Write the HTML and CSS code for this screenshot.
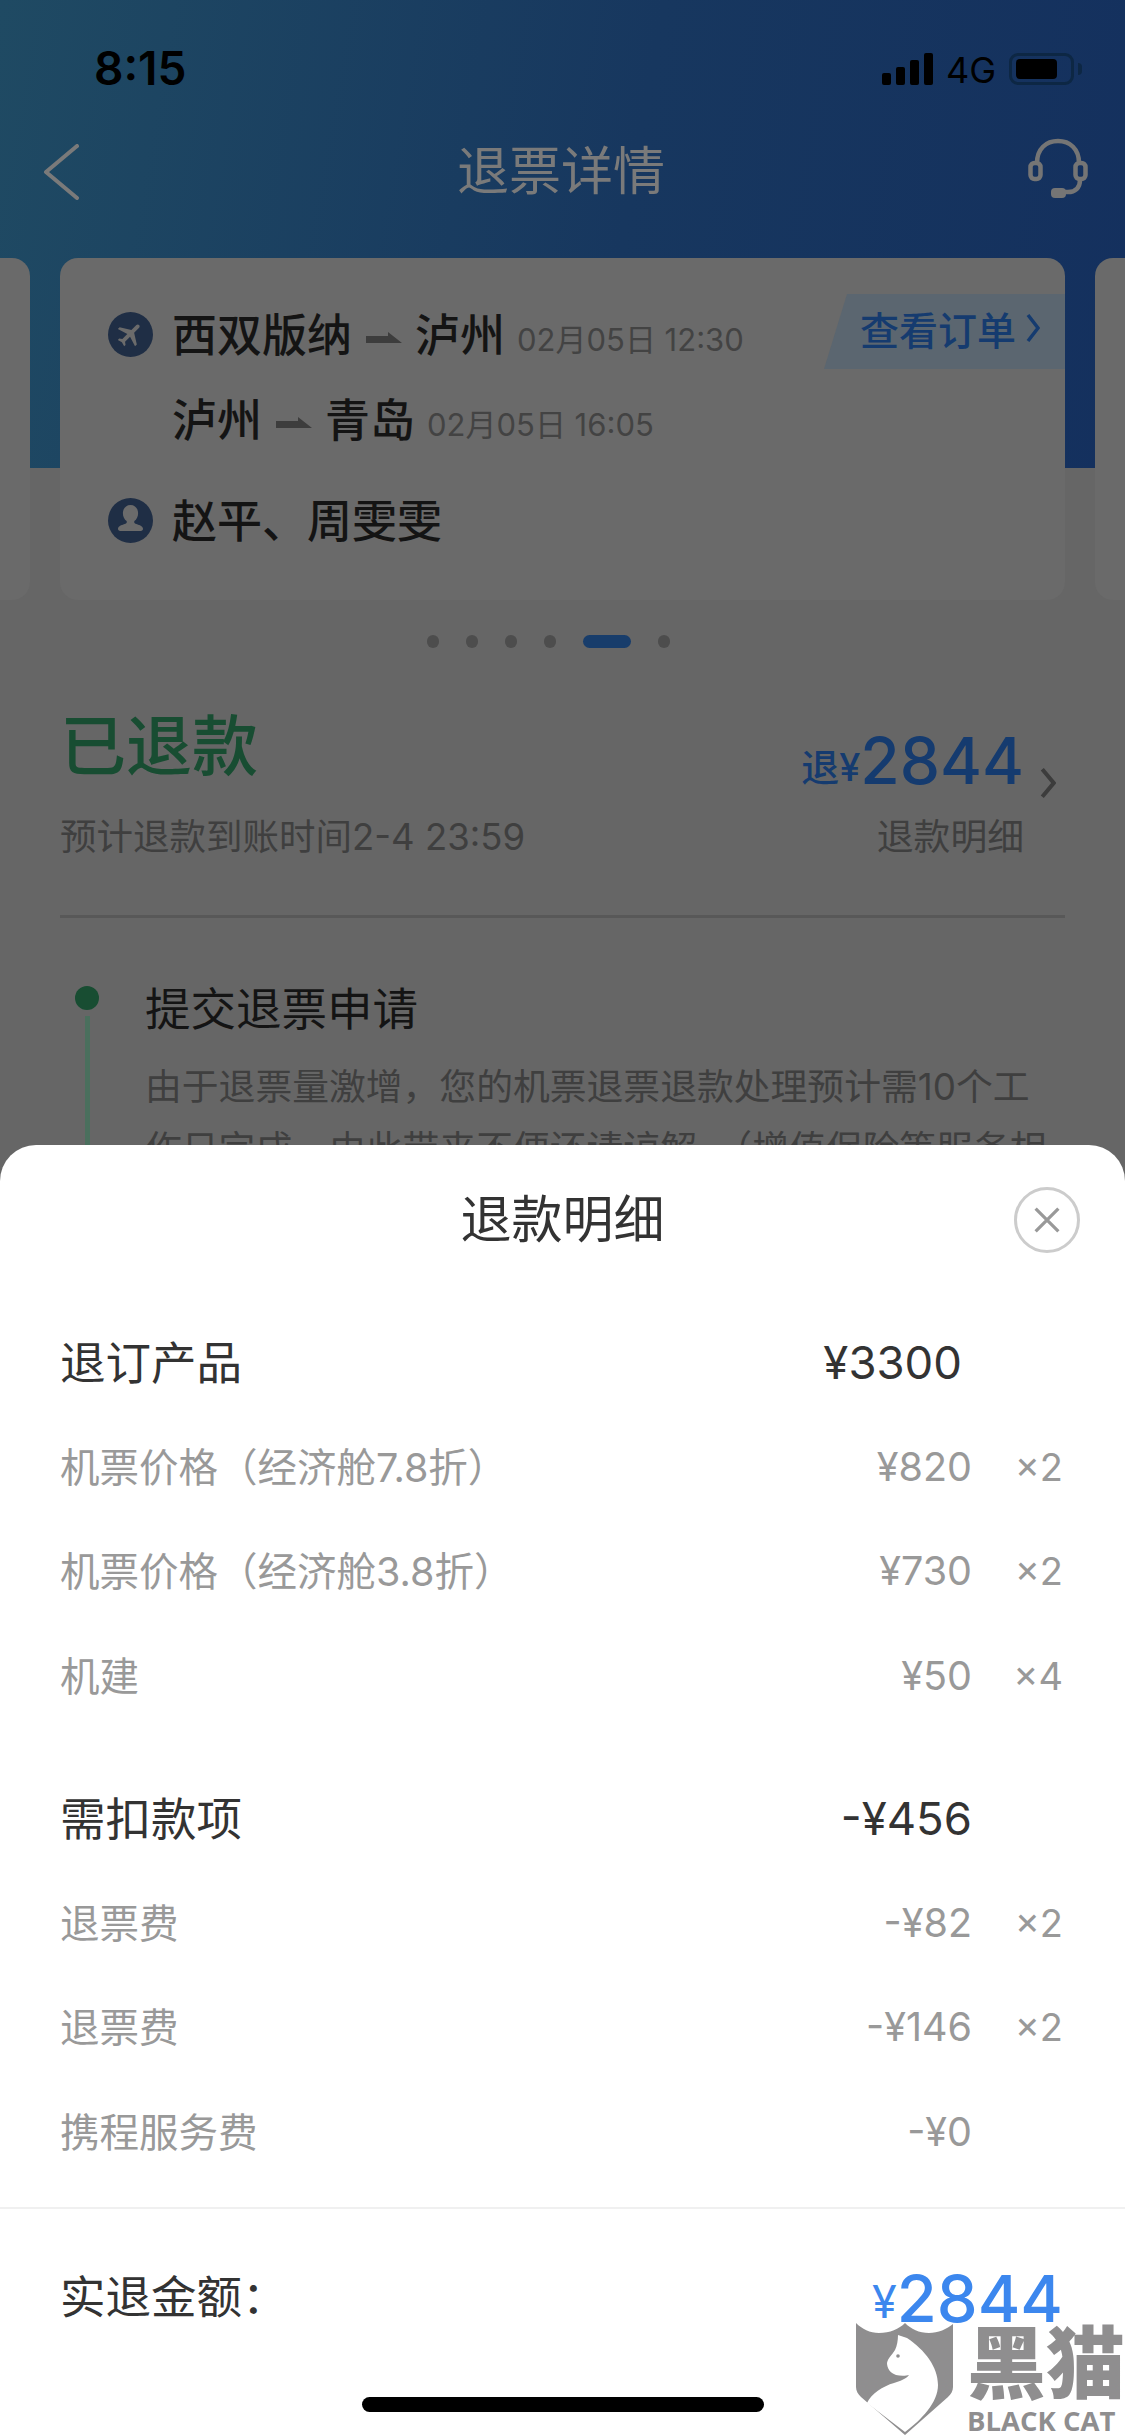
FILE: index.html
```html
<!DOCTYPE html>
<html lang="zh-CN">
<head>
    <meta charset="UTF-8">
    <meta name="viewport" content="width=device-width, initial-scale=1.0">
    <title>退票详情</title>
    <link rel="stylesheet" href="styles.css">
</head>
<body>
    <header class="hero">
        <div class="status-bar">
            <span class="time">8:15</span>
            <div class="status-right">
                <div class="signal"><i></i><i></i><i></i><i></i></div>
                <span class="network">4G</span>
                <div class="battery"><i></i></div>
                <div class="battery-nub"></div>
            </div>
        </div>
        <nav class="nav">
            <svg class="back" viewBox="0 0 36 56" fill="none" stroke="#7a7a7a" stroke-width="4" stroke-linecap="round" stroke-linejoin="round"><path d="M34 2 3 28l31 26"/></svg>
            <h1>退票详情</h1>
            <svg class="service" viewBox="0 0 60 60" fill="none" stroke="#757575" stroke-width="4.5">
                <path d="M9 25C9 11 18 3 30 3s21 8 21 22"/>
                <rect x="2.5" y="25" width="10" height="16" rx="4"/>
                <rect x="47.5" y="25" width="10" height="16" rx="4"/>
                <path d="M52 42c0 8-5 12-12 12h-6"/>
                <rect x="23" y="50" width="15" height="10" rx="4" fill="#757575" stroke="none"/>
            </svg>
        </nav>
    </header>

    <div class="cards">
        <div class="card"></div>
        <div class="card">
            <a class="order-link"><span>查看订单</span>
                <svg viewBox="0 0 14 30" fill="none" stroke="#153b6f" stroke-width="3.5"><path d="M2 2l10 13L2 28"/></svg>
            </a>
            <div class="route">
                <svg class="badge" viewBox="0 0 45 45"><circle cx="22.5" cy="22.5" r="22.5" fill="#1f2e45"/><path fill="#6b6b6b" transform="translate(22.5 22.5) rotate(45) scale(1.28) translate(-12 -12)" d="M21 16v-2l-8-5V3.5c0-.83-.67-1.5-1.5-1.5S10 2.67 10 3.5V9l-8 5v2l8-2.5V19l-2 1.5V22l3.5-1 3.5 1v-1.5L13 19v-5.5l8 2.5z"/></svg>
                <b>西双版纳</b>
                <svg class="arrow" viewBox="0 0 36 11"><path d="M0 4h22V0l14 11H0z"/></svg>
                <b>泸州</b>
                <span class="date">02月05日 12:30</span>
            </div>
            <div class="route route-next">
                <b>泸州</b>
                <svg class="arrow" viewBox="0 0 36 11"><path d="M0 4h22V0l14 11H0z"/></svg>
                <b>青岛</b>
                <span class="date">02月05日 16:05</span>
            </div>
            <div class="route route-people">
                <svg class="badge" viewBox="0 0 45 45"><circle cx="22.5" cy="22.5" r="22.5" fill="#1f2e45"/><path fill="#6b6b6b" d="M22.5 7c4.6 0 7.6 3.6 7.6 8.2 0 3.4-1.500 6.200-3.700 7.900-.6 1.300.2 2.300 2 2.900 3.500 1.100 6.600 2.400 6.600 4.800 0 1.300-.9 2.200-2.200 2.200H12.200c-1.300 0-2.200-.9-2.200-2.200 0-2.400 3.100-3.700 6.600-4.800 1.800-.6 2.600-1.600 2-2.900-2.200-1.700-3.700-4.500-3.700-7.900C14.900 10.600 17.900 7 22.500 7z"/></svg>
                <b>赵平、周雯雯</b>
            </div>
        </div>
        <div class="card"></div>
    </div>

    <div class="dots"><i></i><i></i><i></i><i></i><i class="active"></i><i></i></div>

    <section class="refund">
        <div>
            <h2>已退款</h2>
            <p>预计退款到账时间2-4 23:59</p>
        </div>
        <div class="refund-amount">
            <div class="refund-sum"><small>退¥</small><strong>2844</strong></div>
            <p>退款明细</p>
            <svg viewBox="0 0 14 26" fill="none" stroke="#3c3c3c" stroke-width="3.5"><path d="M2 1l10 12L2 25"/></svg>
        </div>
    </section>

    <section class="timeline">
        <div class="rail"><i></i></div>
        <div class="step">
            <h3>提交退票申请</h3>
            <p>由于退票量激增，您的机票退票退款处理预计需10个工<br>作日完成，由此带来不便还请谅解。（增值保险等服务相</p>
        </div>
    </section>

    <div class="sheet">
        <div class="sheet-title">退款明细</div>
        <button class="close">
            <svg viewBox="0 0 32 32" fill="none" stroke="#999" stroke-width="4"><path d="M2 2l28 28M30 2L2 30"/></svg>
        </button>

        <div class="group">
            <div class="row row-head"><span class="label">退订产品</span><span class="amount shift">¥3300</span><span></span></div>
            <div class="row"><span class="label">机票价格（经济舱7.8折）</span><span class="amount">¥820</span><span class="qty">×2</span></div>
            <div class="row"><span class="label">机票价格（经济舱3.8折）</span><span class="amount">¥730</span><span class="qty">×2</span></div>
            <div class="row"><span class="label">机建</span><span class="amount">¥50</span><span class="qty">×4</span></div>
        </div>
        <div class="group group-fees">
            <div class="row row-head"><span class="label">需扣款项</span><span class="amount">-¥456</span><span></span></div>
            <div class="row"><span class="label">退票费</span><span class="amount">-¥82</span><span class="qty">×2</span></div>
            <div class="row"><span class="label">退票费</span><span class="amount">-¥146</span><span class="qty">×2</span></div>
            <div class="row"><span class="label">携程服务费</span><span class="amount">-¥0</span><span></span></div>
        </div>

        <div class="total">
            <span>实退金额：</span>
            <div class="total-sum"><small>¥</small><strong>2844</strong></div>
        </div>
    </div>

    <div class="watermark">
        <svg viewBox="0 0 97 112">
            <path fill="#8f8e8f" d="M0 0c6 6 14 10 23 10 11 0 20-4 26-10 6 6 14 10 24 10 9 0 18-4 24-9v63c0 4-2 7-5 10L49 112 5 74c-3-3-5-6-5-10z"/>
            <path fill="#fff" d="M42 12l9 3c18 12 31 29 31 47 0 18-17 35-33 47L11 80c4-9 16-17 27-20 6-2 12-4 15-8-3 1-9 1-13 0-6-2-9-7-9-12 1-5 5-8 8-13 2-4 3-10 3-15z"/>
            <circle cx="42" cy="33" r="1.8" fill="#8f8e8f"/>
        </svg>
        <div class="watermark-text">
            <span class="watermark-cn">黑猫</span>
            <span class="watermark-en">BLACK CAT</span>
        </div>
    </div>
    <div class="home-bar"></div>
</body>
</html>
```

FILE: styles.css
```css
* {
    box-sizing: border-box;
}
body {
    font-family: Inter, "Noto Sans CJK SC", sans-serif;
    margin: 0;
    width: 1125px;
    height: 2436px;
    overflow: hidden;
    position: relative;
    background-color: #666;
    color: #141414;
}
h1, h2, h3, p {
    margin: 0;
    font-weight: 400;
}

/* top */
.hero {
    height: 468px;
    background: linear-gradient(100deg, #1f4a63 0%, #17375f 55%, #14305e 100%);
}
.status-bar {
    height: 132px;
    padding: 40px 43px 0 94px;
    display: flex;
    justify-content: space-between;
    color: #000;
}
.time {
    font-size: 46px;
    font-weight: 600;
    line-height: 56px;
}
.status-right {
    display: flex;
    align-items: flex-start;
    padding-top: 13px;
}
.signal {
    display: flex;
    align-items: flex-end;
    gap: 5px;
    height: 32px;
}
.signal i {
    width: 9px;
    border-radius: 2px;
    background: #000;
}
.signal i:nth-child(1) { height: 12px; }
.signal i:nth-child(2) { height: 18px; }
.signal i:nth-child(3) { height: 25px; }
.signal i:nth-child(4) { height: 32px; }
.network {
    font-size: 36px;
    line-height: 34px;
    margin-left: 13px;
}
.battery {
    width: 65px;
    height: 32px;
    margin-left: 13px;
    padding: 3px 4px;
    border: 3px solid #0d2744;
    border-radius: 9px;
}
.battery i {
    display: block;
    width: 41px;
    height: 20px;
    border-radius: 4px;
    background: #000;
}
.battery-nub {
    width: 4px;
    height: 12px;
    margin: 10px 0 0 4px;
    border-radius: 0 4px 4px 0;
    background: #0d2744;
}
.nav {
    display: flex;
    align-items: center;
    padding: 0 37px 0 43px;
    height: 80px;
}
.nav h1 {
    flex: 1;
    text-align: center;
    font-size: 52px;
    line-height: 76px;
    color: #7a7a7a;
}
.back {
    width: 36px;
    height: 56px;
    margin-right: 15px;
}
.service {
    width: 60px;
    height: 60px;
    margin-top: -8px;
}

/* cards */
.cards {
    display: flex;
    justify-content: center;
    gap: 30px;
    margin-top: -210px;
    overflow: hidden;
}
.card {
    flex: 0 0 1005px;
    height: 342px;
    padding-top: 54px;
    position: relative;
    background: #6a6a6a;
    border-radius: 18px;
}
.order-link {
    position: absolute;
    top: 36px;
    right: 0;
    width: 241px;
    height: 75px;
    padding-left: 36px;
    display: flex;
    align-items: center;
    gap: 10px;
    font-size: 39px;
    font-weight: 500;
    color: #153b6f;
    background: #5b6670;
    clip-path: polygon(23px 0, 100% 0, 100% 100%, 0 100%);
}
.order-link span {
    margin-top: -8px;
}
.order-link svg {
    width: 14px;
    height: 30px;
    margin-top: -8px;
}
.route {
    display: flex;
    align-items: center;
    height: 45px;
    padding-left: 48px;
}
.route b {
    font-size: 45px;
    font-weight: 500;
    margin-bottom: 5px;
    color: #141414;
}
.route-next {
    margin-top: 40px;
    padding-left: 112px;
}
.route-people {
    margin-top: 56px;
}
.badge {
    width: 45px;
    height: 45px;
    margin-right: 19px;
}
.arrow {
    width: 36px;
    height: 11px;
    margin: 6px 13.5px 0;
    fill: #3d3d3d;
}
.date {
    margin: 6px 0 0 12px;
    font-size: 31px;
    color: #434343;
}

/* dots */
.dots {
    display: flex;
    gap: 27px;
    padding-left: 427px;
    margin-top: 35px;
}
.dots i {
    width: 12px;
    height: 13px;
    border-radius: 7px;
    background: #4d4d4d;
}
.dots .active {
    width: 48px;
    background: #183d6b;
}

/* refund status */
.refund {
    margin: 58px 60px 0;
    height: 212px;
    display: flex;
    justify-content: space-between;
    border-bottom: 3px solid #585858;
}
.refund h2 {
    font-size: 66px;
    font-weight: 500;
    line-height: 80px;
    color: #184d32;
}
.refund h2 + p {
    margin-top: 26px;
    font-size: 36.5px;
    line-height: 50px;
    color: #3f3f3f;
}
.refund-amount {
    position: relative;
    padding-right: 41px;
    text-align: right;
}
.refund-amount p {
    margin-top: 15px;
    font-size: 36.8px;
    line-height: 50px;
    color: #3f3f3f;
}
.refund-amount svg {
    position: absolute;
    right: 9px;
    top: 62px;
    width: 16px;
    height: 30px;
}
.refund-sum {
    height: 91px;
    color: #153b6f;
    display: flex;
    justify-content: flex-end;
    align-items: flex-end;
}
.refund-sum small {
    font-size: 38px;
    font-weight: 500;
    line-height: 60px;
}
.refund-sum strong {
    font-size: 64px;
    font-weight: 500;
    line-height: 72px;
}

/* timeline */
.timeline {
    margin: 68px 40px 0 75px;
    display: flex;
    gap: 46px;
}
.rail {
    width: 24px;
    height: 180px;
    flex: none;
    background: linear-gradient(#4a6f5d, #4a6f5d) 10px 30px / 5px 100% no-repeat;
}
.rail i {
    display: block;
    width: 24px;
    height: 24px;
    border-radius: 50%;
    background: #184d32;
}
.step h3 {
    font-size: 45.5px;
    line-height: 48px;
    color: #141414;
}
.step p {
    margin-top: 22px;
    height: 91px;
    overflow: hidden;
    white-space: nowrap;
    font-size: 36.8px;
    line-height: 62px;
    color: #3f3f3f;
}

/* bottom sheet */
.sheet {
    position: absolute;
    left: 0;
    right: 0;
    bottom: 0;
    height: 1291px;
    background: #fff;
    border-radius: 36px 36px 0 0;
    color: #333;
}
.sheet-title {
    height: 150px;
    line-height: 150px;
    text-align: center;
    font-size: 51px;
}
.close {
    position: absolute;
    top: 42px;
    right: 45px;
    width: 66px;
    height: 66px;
    padding: 17px;
    border: 3px solid #ccc;
    border-radius: 50%;
    background: #fff;
}
.close svg {
    display: block;
    width: 100%;
    height: 100%;
}
.group {
    margin-top: 15px;
    padding: 0 62px 0 60px;
}
.group-fees {
    margin-top: 38px;
}
.row {
    display: grid;
    grid-template-columns: 1fr auto 91px;
    align-items: center;
    height: 104.5px;
    font-size: 39.5px;
    color: #999;
}
.label {
    font-size: 39.5px;
    margin-bottom: 5px;
}
.row-head {
    font-size: 45.5px;
    color: #333;
}
.row-head .label {
    font-size: 45.5px;
}
.amount {
    text-align: right;
}
.shift {
    margin-right: 10px;
}
.qty {
    text-align: right;
    font-size: 38px;
}
.total {
    margin-top: 23px;
    padding: 44px 62px 0 60px;
    height: 250px;
    display: flex;
    justify-content: space-between;
    align-items: flex-start;
    border-top: 2px solid #f0f0f0;
    font-size: 45.5px;
}
.total span {
    line-height: 90px;
}
.total-sum {
    display: flex;
    align-items: flex-end;
    height: 80px;
    margin-top: 6px;
    color: #3c87ee;
}
.total-sum small {
    font-size: 45px;
    line-height: 74px;
}
.total-sum strong {
    font-size: 65px;
    font-weight: 500;
    line-height: 80px;
}

/* overlays */
.watermark {
    position: absolute;
    left: 856px;
    top: 2323px;
    display: flex;
    gap: 14px;
}
.watermark svg {
    width: 97px;
    height: 112px;
}
.watermark-text {
    display: flex;
    flex-direction: column;
    width: 158px;
    color: #8f8e8f;
    font-weight: 700;
    white-space: nowrap;
}
.watermark-cn {
    font-family: "Noto Sans CJK SC", sans-serif;
    font-weight: 900;
    font-size: 79px;
    line-height: 72px;
}
.watermark-en {
    font-family: "Open Sans", sans-serif;
    font-size: 27.5px;
    line-height: 28px;
    margin-top: 12px;
}
.home-bar {
    position: absolute;
    left: 362px;
    top: 2397px;
    width: 402px;
    height: 15px;
    border-radius: 8px;
    background: #000;
}
```
